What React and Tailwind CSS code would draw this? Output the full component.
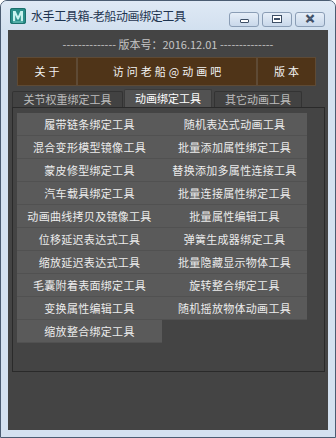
import React from 'react';

const leftTools = [
  '履带链条绑定工具',
  '混合变形模型镜像工具',
  '蒙皮修型绑定工具',
  '汽车载具绑定工具',
  '动画曲线拷贝及镜像工具',
  '位移延迟表达式工具',
  '缩放延迟表达式工具',
  '毛囊附着表面绑定工具',
  '变换属性编辑工具',
  '缩放整合绑定工具',
];

const rightTools = [
  '随机表达式动画工具',
  '批量添加属性绑定工具',
  '替换添加多属性连接工具',
  '批量连接属性绑定工具',
  '批量属性编辑工具',
  '弹簧生成器绑定工具',
  '批量隐藏显示物体工具',
  '旋转整合绑定工具',
  '随机摇放物体动画工具',
];

const font = { fontFamily: '"Noto Sans CJK SC", "Liberation Sans", sans-serif' };

const ToolButton = ({ label }) => (
  <div className="h-[23px] flex items-center justify-center bg-[#5a5a5a] border-b border-[#515151] text-[11px] text-[#ececec] tracking-[0.3px] whitespace-nowrap">
    {label}
  </div>
);

const WinButton = ({ children }) => (
  <div className="w-[30px] h-[15px] rounded-[3px] border border-[#8a9db5] bg-gradient-to-b from-[#e6eef8] to-[#c9d8ea] flex items-center justify-center">
    {children}
  </div>
);

export default function App() {
  return (
    <div className="w-[336px] h-[438px] bg-[#d4e1f0] border border-[#4b5c72] rounded-t-[7px] flex flex-col overflow-hidden" style={font}>
      {/* title bar */}
      <div className="h-[29px] flex items-center pl-[9px] pr-[10px] bg-gradient-to-b from-[#dfe9f5] to-[#d2e0ef]">
        <svg width="16" height="16" viewBox="0 0 16 16">
          <rect width="16" height="16" rx="2" fill="#2a8f8a" />
          <rect x="0.5" y="0.5" width="15" height="15" rx="2" fill="none" stroke="#1b6e6b" />
          <path d="M3 13V3h2.6L8 8.2 10.4 3H13v10h-2.2V7L8.8 11.5H7.2L5.2 7v6z" fill="#c8f2ee" />
          <rect x="3" y="13.5" width="10" height="1" fill="#7fd0c8" />
        </svg>
        <span className="ml-[5px] text-[12px] text-[#1e3450] tracking-[-0.4px] leading-none">水手工具箱-老船动画绑定工具</span>
        <div className="ml-auto flex gap-[3px] mt-[7px]">
          <WinButton>
            <div className="w-[9px] h-[4px] mt-[3px] border border-[#3e4f66] bg-white rounded-[1px]" />
          </WinButton>
          <WinButton>
            <div className="w-[10px] h-[8px] border border-[#3e4f66] bg-white flex items-center justify-center">
              <div className="w-[6px] h-[2px] border border-[#3e4f66]" />
            </div>
          </WinButton>
          <WinButton>
            <span className="text-[12px] leading-none font-bold text-white" style={{ WebkitTextStroke: '0.6px #3e4f66', fontFamily: '"Liberation Sans", sans-serif' }}>✕</span>
          </WinButton>
        </div>
      </div>

      {/* client area */}
      <div className="mx-[7px] h-[400px] bg-[#444444] flex flex-col">
        <div className="mt-[7px] h-[14px] leading-[14px] text-center text-[11px] text-[#c4c4c4]">
          -------------- 版本号：2016.12.01 --------------
        </div>

        <div className="mt-[6px] ml-[9px] w-[299px] h-[29px] flex text-[11px] text-[#f2f2f2] tracking-[3px]">
          <div className="w-[60px] bg-[#4f3418] border border-[#5e4a35] flex items-center justify-center pl-[3px]">关于</div>
          <div className="w-[180px] bg-[#4f3418] border border-[#5e4a35] flex items-center justify-center pl-[3px]">访问老船@动画吧</div>
          <div className="flex-1 bg-[#4f3418] border border-[#5e4a35] flex items-center justify-center pl-[3px]">版本</div>
        </div>

        {/* tabs */}
        <div className="mt-[4px] ml-[4px] h-[17px] flex items-end text-[11px]">
          <div className="w-[111px] h-[16px] bg-[#424242] border border-b-0 border-[#333] rounded-t-[2px] text-[#bdbdbd] flex items-center justify-center leading-none">关节权重绑定工具</div>
          <div className="ml-[1px] w-[88px] h-[18px] bg-[#525252] border border-b-0 border-[#3a3a3a] rounded-t-[2px] text-white flex items-center justify-center leading-none">动画绑定工具</div>
          <div className="ml-[2px] w-[88px] h-[16px] bg-[#424242] border border-b-0 border-[#333] rounded-t-[2px] text-[#bdbdbd] flex items-center justify-center leading-none">其它动画工具</div>
        </div>

        <div className="ml-[4px] w-[313px] h-[265px] border border-[#2a2a2a] pt-[5px] pl-[4px]">
          <div className="flex">
            <div className="w-[145px] flex flex-col">
              {leftTools.map((t) => <ToolButton key={t} label={t} />)}
            </div>
            <div className="w-[145px] flex flex-col">
              {rightTools.map((t) => <ToolButton key={t} label={t} />)}
            </div>
          </div>
        </div>
      </div>
    </div>
  );
}
